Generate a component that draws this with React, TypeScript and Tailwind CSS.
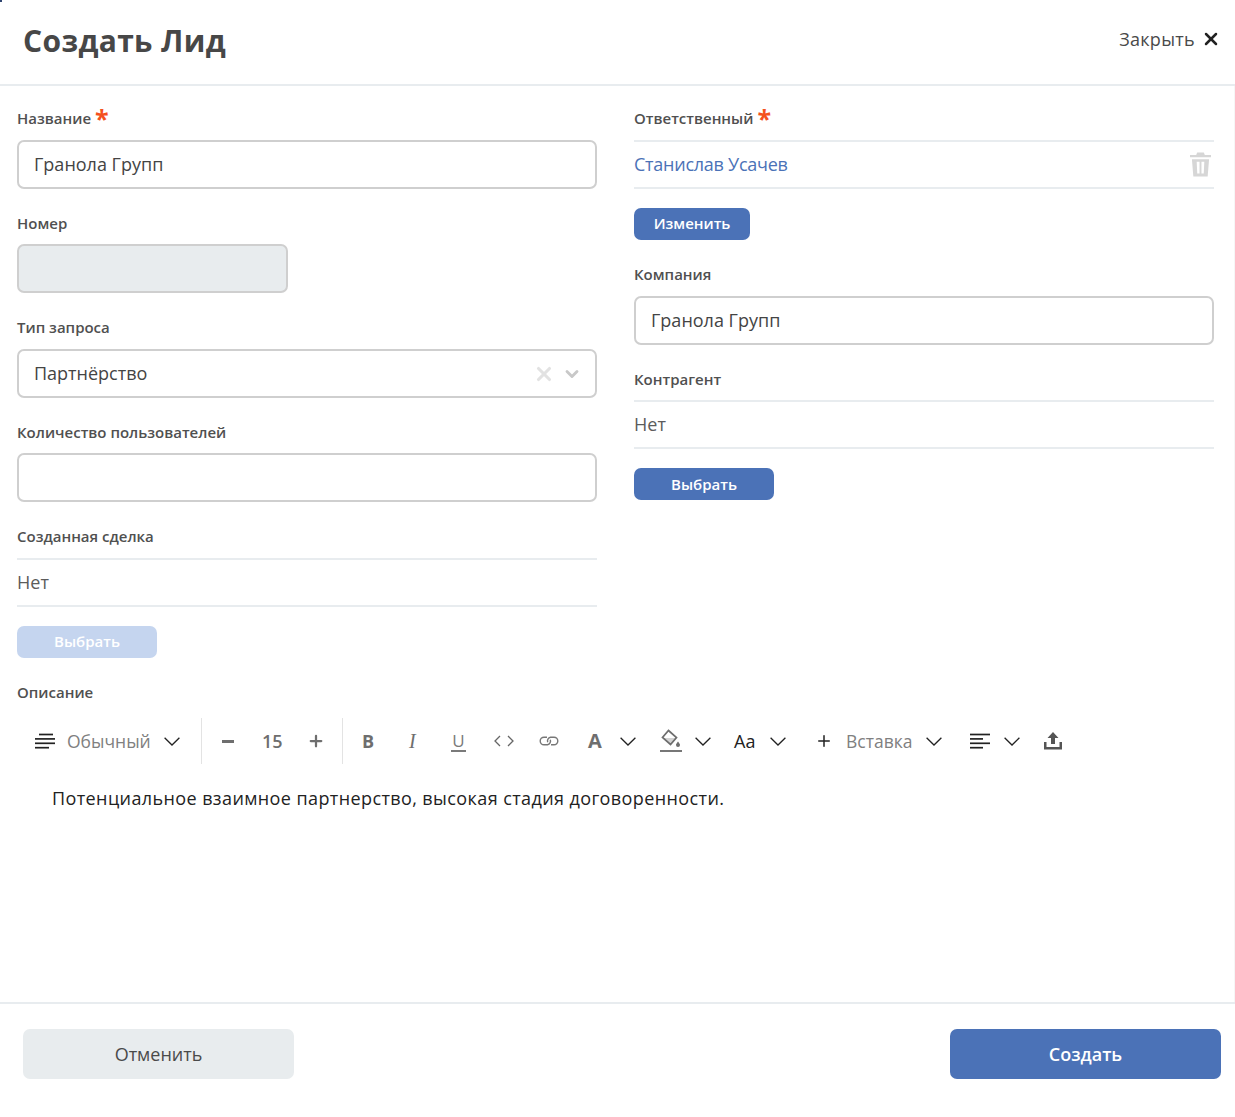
import { ReactNode } from 'react';
import { ChevronDown, Plus, X } from 'lucide-react';

const BLUE = 'bg-[#4b72b7]';

function Label({ children, required, className = '' }: { children: ReactNode; required?: boolean; className?: string }) {
  return (
    <div className={`flex h-5 items-center text-[15px] font-semibold leading-5 text-[#505050] ${className}`}>
      {children}
      {required && <span className="ml-1 -mt-[1px] text-[25px] font-bold leading-5 text-[#f4511e]">*</span>}
    </div>
  );
}

function Input({ value, className = '' }: { value?: string; className?: string }) {
  return (
    <div className={`flex h-[49px] items-center rounded-[7px] border-2 border-[#cfcfcf] bg-white pl-[15px] text-[18px] font-medium text-[#444] ${className}`}>
      {value}
    </div>
  );
}

function ReadOnly({ children, className = 'text-[#5c5c5c]' }: { children: ReactNode; className?: string }) {
  return (
    <div className={`flex h-[49px] items-center justify-between border-y-2 border-[#e8ecef] text-[18px] ${className}`}>
      {children}
    </div>
  );
}

function Btn({ children, className = '' }: { children: ReactNode; className?: string }) {
  return (
    <div className={`flex h-8 items-center justify-center rounded-[7px] text-[15px] font-semibold text-white ${className}`}>
      {children}
    </div>
  );
}

function Chevron({ className = '' }: { className?: string }) {
  return (
    <svg viewBox="0 0 16 9" className={`h-[9px] w-4 shrink-0 ${className}`} fill="none" stroke="#222" strokeWidth="1.3">
      <path d="M0.6 0.8 L8 8 L15.4 0.8" />
    </svg>
  );
}

// rows of the paragraph-style and align icons: [x1, x2]
function Lines({ rows, className = '' }: { rows: [number, number][]; className?: string }) {
  return (
    <svg viewBox="0 0 20 16" className={`h-4 w-5 shrink-0 ${className}`} stroke="#222" strokeWidth="1.7">
      {rows.map(([a, b], i) => (
        <path key={i} d={`M${a} ${1.5 + i * 4.4} H${b}`} />
      ))}
    </svg>
  );
}

function Toolbar() {
  return (
    <div className="ml-[35px] flex h-[46px] items-center text-[#7a7a7a]">
      <Lines rows={[[4, 18], [0, 20], [0, 20], [0, 14]]} />
      <span className="ml-3 mt-[2px] w-[83px] text-[17.5px] leading-none text-[#808080]">Обычный</span>
      <Chevron className="ml-[14px]" />
      <div className="ml-[21px] h-[46px] w-px bg-[#e3e3e3]" />
      <span className="ml-5 h-[3px] w-3 bg-[#6e6e6e]" />
      <span className="ml-7 w-5 text-[18px] font-semibold leading-none text-[#6e6e6e]">15</span>
      <Plus className="ml-[25px] h-[18px] w-[18px] text-[#6e6e6e]" strokeWidth={3} />
      <div className="ml-[17px] h-[46px] w-px bg-[#e3e3e3]" />
      <span className="ml-[19px] w-3 text-[18px] font-bold leading-none text-[#6e6e6e]">B</span>
      <span className="ml-[35px] w-[11px] font-['Liberation_Serif',serif] text-[20px] italic leading-none text-[#6e6e6e]">I</span>
      <span className="ml-[31px] flex w-[15px] flex-col items-center border-b-2 border-[#7a7a7a] text-[17px] leading-[19px] text-[#7a7a7a]">U</span>
      <svg viewBox="0 0 20 12" className="ml-[28px] h-3 w-5" fill="none" stroke="#666" strokeWidth="1.3">
        <path d="M6 1 L1 6 L6 11 M14 1 L19 6 L14 11" />
      </svg>
      <svg viewBox="0 0 20 10" className="ml-[25px] h-[10px] w-5" fill="none" stroke="#777" strokeWidth="1.4">
        <path d="M8 1.2 H5 a3.8 3.8 0 0 0 0 7.6 H8.5 a3.8 3.8 0 0 0 2.8 -5" />
        <path d="M12 8.8 H15 a3.8 3.8 0 0 0 0 -7.6 H11.5 a3.8 3.8 0 0 0 -2.8 5" />
      </svg>
      <span className="ml-[29px] w-[15px] text-[20px] font-bold leading-none text-[#6e6e6e]">A</span>
      <Chevron className="ml-[17px]" />
      <svg viewBox="0 0 22 24" className="ml-[24px] h-6 w-[22px]">
        <path d="M8.5 1.5 L16.5 8.5 L10.5 15.5 L2.5 8.5 Z" fill="none" stroke="#6e6e6e" strokeWidth="1.7" />
        <path d="M3 9 L16 9 L10.5 15 Z" fill="#6e6e6e" fillOpacity="0.3" />
        <path d="M18 12.5 c1.5 2 2 2.6 2 3.4 a2 2 0 0 1 -4 0 c0 -.8 .5 -1.4 2 -3.4 Z" fill="#6e6e6e" />
        <path d="M0 22 H22" stroke="#777" strokeWidth="2" />
      </svg>
      <Chevron className="ml-[13px]" />
      <span className="ml-[23px] w-[22px] text-[18px] leading-none text-[#222]">Aa</span>
      <Chevron className="ml-[14px]" />
      <Plus className="ml-[29px] h-[18px] w-[18px] text-[#222]" strokeWidth={2} />
      <span className="ml-[13px] mt-[2px] w-[66px] text-[17.5px] leading-none text-[#808080]">Вставка</span>
      <Chevron className="ml-[14px]" />
      <Lines rows={[[0, 20], [0, 13], [0, 20], [0, 13]]} className="ml-[28px]" />
      <Chevron className="ml-[14px]" />
      <svg viewBox="0 0 18 18" className="ml-6 h-[18px] w-[18px]" fill="#555">
        <path d="M9 0 L14.5 6 H11 V12 H7 V6 H3.5 Z" />
        <path d="M0 10 H2.5 V15 H15.5 V10 H18 V17.5 H0 Z" />
      </svg>
    </div>
  );
}

export default function App() {
  return (
    <div className="relative flex h-[1117px] flex-col bg-white font-['Open_Sans','Noto_Sans',sans-serif]">
      <span className="absolute left-0 top-0 h-[2px] w-[2px] bg-[#2f4570]" />
      <header className="flex h-[86px] shrink-0 items-center justify-between border-b-2 border-[#e8ecef] pb-[3px] pl-[23px] pr-[14px]">
        <h1 className="text-[30px] font-bold leading-none tracking-[0.35px] text-[#474747]">Создать Лид</h1>
        <button className="-mt-[3px] flex items-center gap-[6px] text-[18px] tracking-[0.3px] text-[#4a4a4a]">
          Закрыть
          <X className="h-5 w-5 text-[#222]" strokeWidth={3} />
        </button>
      </header>

      <div className="flex-1 border-r border-[#f6f6f6]">
        <div className="grid grid-cols-[580px_580px] gap-x-[37px] pl-[17px] pt-[22px]">
          <div>
            <Label required className="mb-3">Название</Label>
            <Input value="Гранола Групп" />

            <Label className="mb-[11px] mt-6">Номер</Label>
            <Input className="w-[271px] !bg-[#e8ecee]" />

            <Label className="mb-3 mt-6">Тип запроса</Label>
            <div className="relative">
              <Input value="Партнёрство" />
              <div className="absolute right-[15px] top-[14px] flex items-center gap-[7px]">
                <X className="h-[22px] w-[22px] text-[#e2e2e2]" strokeWidth={3.4} />
                <ChevronDown className="h-5 w-5 text-[#c8c8c8]" strokeWidth={3.4} />
              </div>
            </div>

            <Label className="mb-[11px] mt-6">Количество пользователей</Label>
            <Input />

            <Label className="mb-3 mt-6">Созданная сделка</Label>
            <ReadOnly>Нет</ReadOnly>
            <Btn className="mt-[19px] w-[140px] bg-[#c5d5ef] pb-[2px]">Выбрать</Btn>
          </div>

          <div>
            <Label required className="mb-3">Ответственный</Label>
            <ReadOnly className="tracking-[-0.25px] text-[#4b72b7]">
              Станислав Усачев
              <svg viewBox="0 0 22 25" className="mr-[3px] h-[25px] w-[21px]" fill="#d6d6d6">
                <path d="M7.5 0 H14.5 L15.5 2.5 H22 V5 H0 V2.5 H6.5 Z" />
                <path d="M2 7 H20 L18.5 25 H3.5 Z M7 9.5 L7.6 22 H10 V9.5 Z M12 9.5 V22 H14.4 L15 9.5 Z" fillRule="evenodd" />
              </svg>
            </ReadOnly>
            <Btn className={`mt-[19px] w-[116px] pb-[2px] ${BLUE}`}>Изменить</Btn>

            <Label className="mb-3 mt-6">Компания</Label>
            <Input value="Гранола Групп" />

            <Label className="mb-[11px] mt-6">Контрагент</Label>
            <ReadOnly>Нет</ReadOnly>
            <Btn className={`mt-[19px] w-[140px] ${BLUE}`}>Выбрать</Btn>
          </div>
        </div>

        <Label className="ml-[17px] mt-6">Описание</Label>
        <div className="mt-4">
          <Toolbar />
        </div>
        <p className="ml-[52px] mt-[22px] text-[18px] leading-6 tracking-[0.4px] text-[#222]">
          Потенциальное взаимное партнерство, высокая стадия договоренности.
        </p>
      </div>

      <footer className="mb-[38px] flex h-[77px] items-start justify-between border-t-2 border-[#e8ecef] pl-[23px] pr-[14px] pt-[25px]">
        <button className="h-[50px] w-[271px] rounded-[7px] bg-[#e8ecee] text-[18px] font-medium text-[#4a4a4a]">Отменить</button>
        <button className={`h-[50px] w-[271px] rounded-[7px] text-[18px] font-semibold text-white ${BLUE}`}>Создать</button>
      </footer>
    </div>
  );
}
